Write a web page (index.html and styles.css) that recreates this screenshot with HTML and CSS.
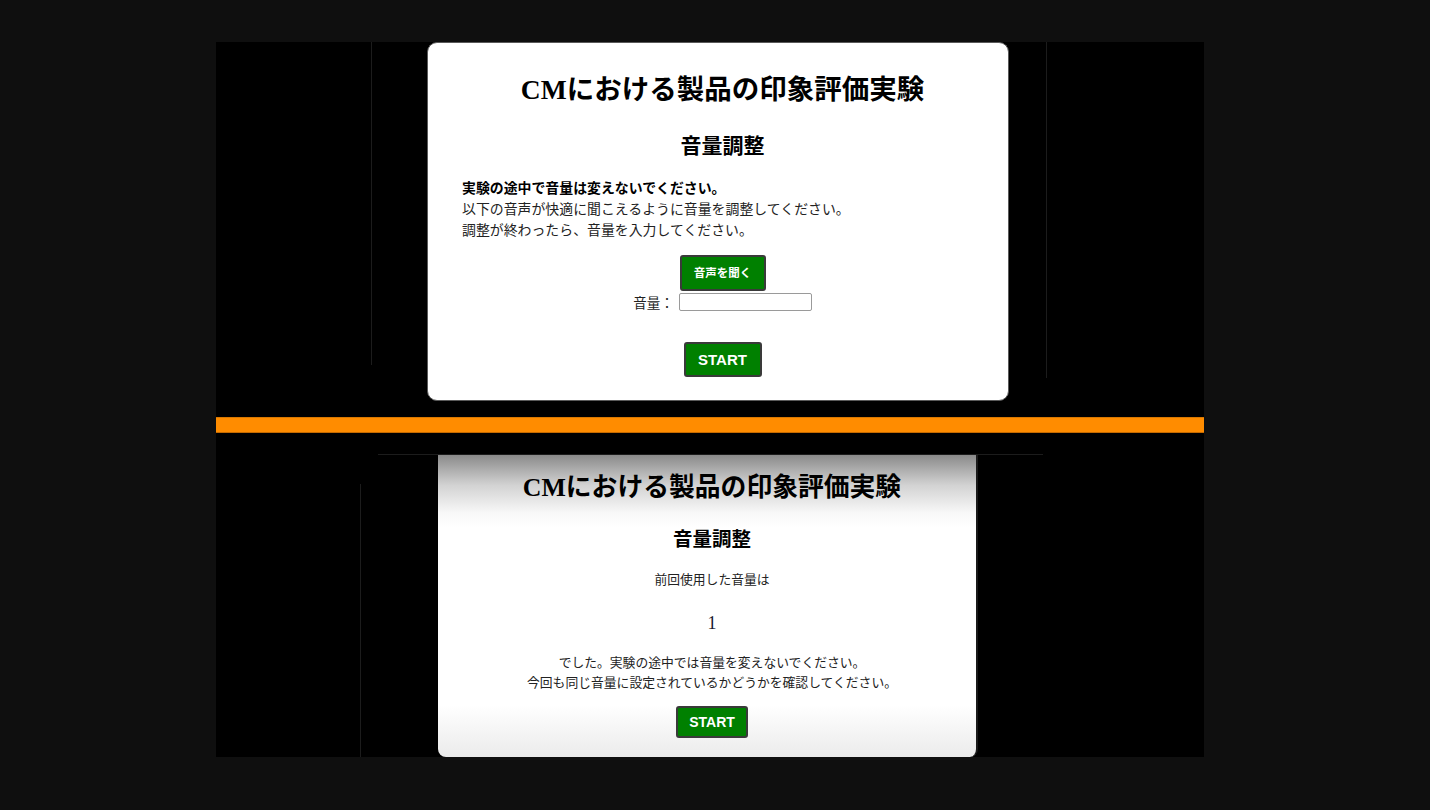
FILE: index.html
```html
<!DOCTYPE html>
<html lang="ja">
<head>
<meta charset="utf-8">
<title>CMにおける製品の印象評価実験</title>
<link rel="stylesheet" href="styles.css">
</head>
<body>
<div class="stage">
  <section class="shot shot-top">
    <div class="card card-top">
      <h1 class="title">CMにおける製品の印象評価実験</h1>
      <h2 class="subtitle">音量調整</h2>
      <div class="notice">
        <p class="line strong">実験の途中で音量は変えないでください。</p>
        <p class="line">以下の音声が快適に聞こえるように音量を調整してください。</p>
        <p class="line">調整が終わったら、音量を入力してください。</p>
      </div>
      <div class="center">
        <button class="btn btn-listen" type="button">音声を聞く</button>
      </div>
      <div class="volume-row">
        <label class="volume-label" for="vol">音量：</label>
        <input class="volume-input" id="vol" type="text">
      </div>
      <div class="center start-wrap">
        <button class="btn btn-start" type="button">START</button>
      </div>
    </div>
  </section>
  <div class="divider"></div>
  <section class="shot shot-bottom">
    <div class="card card-bottom">
      <h1 class="title title-sm">CMにおける製品の印象評価実験</h1>
      <h2 class="subtitle subtitle-sm">音量調整</h2>
      <p class="prev">前回使用した音量は</p>
      <p class="value">1</p>
      <p class="line c">でした。実験の途中では音量を変えないでください。</p>
      <p class="line c">今回も同じ音量に設定されているかどうかを確認してください。</p>
      <div class="center start-wrap2">
        <button class="btn btn-start btn-start-sm" type="button">START</button>
      </div>
    </div>
  </section>
</div>
</body>
</html>
```

FILE: styles.css
```css
html, body {
  margin: 0;
  padding: 0;
  background: #0f0f0f;
}
body {
  font-family: "Liberation Serif", "Noto Sans CJK JP", serif;
  color: #111;
}
.stage {
  width: 988px;
  margin: 42px 0 0 216px;
  background: #000;
  display: flex;
  flex-direction: column;
}
.shot {
  position: relative;
}
.shot-top {
  height: 375px;
}
.shot-top::before,
.shot-top::after {
  content: "";
  position: absolute;
  top: 0;
  width: 1px;
  background: #1c1c1c;
}
.shot-top::before { left: 155px; height: 323px; }
.shot-top::after { left: 830px; height: 336px; }

.card {
  position: relative;
  z-index: 1;
  background: #fff;
  box-sizing: border-box;
}
.card-top {
  margin-left: 211px;
  width: 582px;
  height: 359px;
  border: 1px solid #5a5a5a;
  border-radius: 10px;
  padding: 0 25px 0 34px;
}
.title {
  margin: 30px 0 0;
  text-align: center;
  font-size: 27.5px;
  line-height: 34px;
  font-weight: bold;
  color: #000;
}
.subtitle {
  margin: 25px 0 0;
  text-align: center;
  font-size: 21px;
  line-height: 28px;
  font-weight: bold;
  color: #000;
}
.notice {
  margin-top: 18px;
}
.line {
  margin: 0;
  font-size: 13.9px;
  line-height: 21px;
  color: #222;
}
.strong {
  font-weight: bold;
  color: #000;
}
.center {
  display: flex;
  justify-content: center;
}
.btn {
  background: #008000;
  color: #fff;
  font-family: "Liberation Sans", "Noto Sans CJK JP", sans-serif;
  font-weight: bold;
  border: 2px solid #3a3a3a;
  border-radius: 3px;
  cursor: pointer;
}
.btn-listen {
  margin-top: 14px;
  font-size: 11.5px;
  line-height: 16px;
  padding: 8px 12px;
  width: 86px;
  height: 36px;
}
.volume-row {
  display: flex;
  justify-content: center;
  align-items: center;
  gap: 5px;
  margin-top: 1px;
  height: 20px;
}
.volume-label {
  font-size: 13.5px;
  color: #222;
}
.volume-input {
  box-sizing: border-box;
  width: 133px;
  height: 18px;
  margin: 0;
  border: 1px solid #9a9a9a;
  border-radius: 2px;
  background: #fff;
}
.start-wrap {
  margin-top: 30px;
}
.btn-start {
  font-size: 15px;
  line-height: 17px;
  padding: 7px 12px;
  width: 78px;
  height: 35px;
}

.divider {
  height: 16px;
  background: #ff8c00;
  box-shadow: inset 0 -1px 0 #c56a00, inset 0 1px 0 #d97800;
}

.shot-bottom {
  margin-top: 22px;
  height: 302px;
}
.shot-bottom::before {
  content: "";
  position: absolute;
  left: 162px;
  top: -1px;
  width: 665px;
  height: 1px;
  background: #1c1c1c;
}
.shot-bottom::after {
  content: "";
  position: absolute;
  left: 144px;
  top: 29px;
  width: 1px;
  height: 273px;
  background: #1c1c1c;
}
.card-bottom {
  margin-left: 222px;
  width: 540px;
  height: 302px;
  border-radius: 0 0 8px 8px;
  border-right: 2px solid #1a1a1a;
  background: linear-gradient(to bottom, #8a8a8a 0px, #d2d2d2 30px, #f8f8f8 58px, #fff 72px, #fff 250px, #ebebeb 302px);
  text-align: center;
  padding: 1px 0 0 10px;
}
.title-sm {
  margin-top: 16px;
  font-size: 25.8px;
  line-height: 32px;
}
.subtitle-sm {
  margin-top: 23px;
  font-size: 19.5px;
  line-height: 26px;
}
.prev {
  margin: 17px 0 0;
  font-size: 12.8px;
  line-height: 20px;
  color: #222;
}
.value {
  margin: 21px 0 0;
  font-size: 18px;
  line-height: 24px;
  color: #1a1a2e;
}
.line.c {
  font-size: 12.8px;
  line-height: 20px;
  text-align: center;
}
.value + .line.c {
  margin-top: 18px;
}
.start-wrap2 {
  margin-top: 13px;
}
.btn-start-sm {
  font-size: 14px;
  line-height: 16px;
  padding: 6px 10px;
  width: 72px;
  height: 32px;
}
```
